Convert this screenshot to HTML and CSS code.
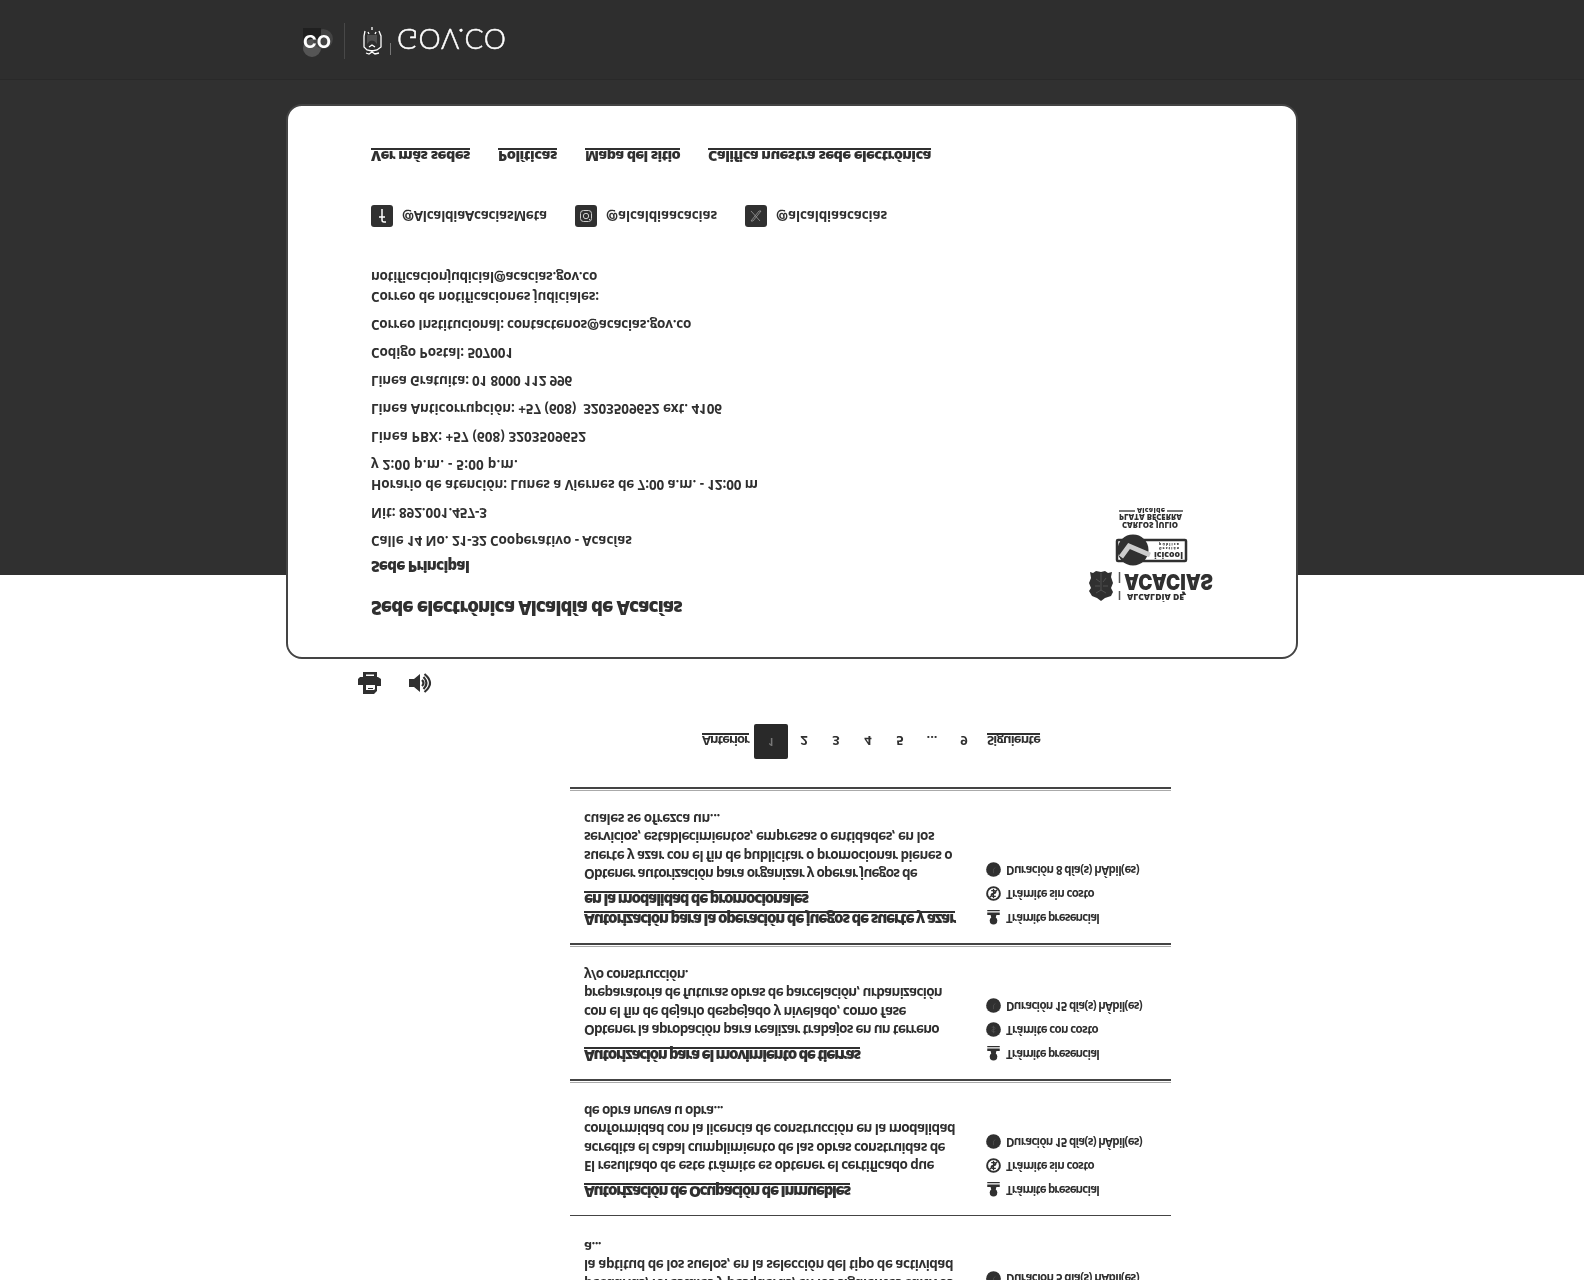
FILE: index.html
```html
<!DOCTYPE html>
<html lang="es">
<head>
<meta charset="utf-8">
<title>Trámites - Alcaldía de Acacías</title>
<link rel="stylesheet" href="styles.css">
</head>
<body>
<svg class="defs" width="0" height="0" aria-hidden="true">
  <symbol id="i-person" viewBox="0 0 16 18"><circle cx="8" cy="5" r="4.500"/><path d="M5.500 8h5l1 4h4v3H.5v-3h4zM.5 16.500h15V18H.5z"/></symbol>
  <symbol id="i-clock" viewBox="0 0 16 16"><circle cx="8" cy="8" r="7.800"/><path d="M8 4v4.500l2 1.500" fill="none" stroke="#4a4a4a"/></symbol>
  <symbol id="i-cost" viewBox="0 0 16 16"><circle cx="8" cy="8" r="7.800"/><path d="M10 5.500H7.500a1.200 1.200 0 000 2.500h1a1.200 1.200 0 010 2.500H6M8 4v8" fill="none" stroke="#505050" stroke-width=".8"/></symbol>
  <symbol id="i-free" viewBox="0 0 16 16"><circle cx="8" cy="8" r="6.800" fill="none" stroke="#303030" stroke-width="2"/><path d="M10.500 5H7a1.400 1.400 0 000 3h2a1.400 1.400 0 010 3H5.500M8 3v10M4 4l8 8" fill="none" stroke="#303030" stroke-width="1.300"/></symbol>
</svg>
<div class="page">
  <main class="list">
    <article class="item item-first">
      <div class="text">
        <p><span data-w="369">pecuarias, forestales y pesqueras, en los siguientes cultivos</span></p>
        <p><span data-w="369">la aptitud de los suelos, en la selección del tipo de actividad</span></p>
        <p><span data-w="17">a...</span></p>
      </div>
      <ul class="meta">
        <li><svg><use href="#i-clock"/></svg><span data-w="133">Duración 5 día(s) hÁbil(es)</span></li>
      </ul>
    </article>
    <article class="item">
      <div class="text">
        <h2><span data-w="266">Autorización de Ocupación de Inmuebles</span></h2>
        <p><span data-w="350">El resultado de este trámite es obtener el certificado que</span></p>
        <p><span data-w="361">acredita el cabal cumplimiento de las obras construidas de</span></p>
        <p><span data-w="371">conformidad con la licencia de construcción en la modalidad</span></p>
        <p><span data-w="139">de obra nueva u obra...</span></p>
      </div>
      <ul class="meta">
        <li><svg><use href="#i-person"/></svg><span data-w="93">Trámite presencial</span></li>
        <li><svg><use href="#i-free"/></svg><span data-w="88">Trámite sin costo</span></li>
        <li><svg><use href="#i-clock"/></svg><span data-w="136">Duración 15 día(s) hÁbil(es)</span></li>
      </ul>
    </article>
    <article class="item">
      <div class="text">
        <h2><span data-w="276">Autorización para el movimiento de tierras</span></h2>
        <p><span data-w="355">Obtener la aprobación para realizar trabajos en un terreno</span></p>
        <p><span data-w="322">con el fin de dejarlo despejado y nivelado, como fase</span></p>
        <p><span data-w="358">preparatoria de futuras obras de parcelación, urbanización</span></p>
        <p><span data-w="104">y/o construcción.</span></p>
      </div>
      <ul class="meta">
        <li><svg><use href="#i-person"/></svg><span data-w="93">Trámite presencial</span></li>
        <li><svg><use href="#i-cost"/></svg><span data-w="92">Trámite con costo</span></li>
        <li><svg><use href="#i-clock"/></svg><span data-w="136">Duración 15 día(s) hÁbil(es)</span></li>
      </ul>
    </article>
    <article class="item">
      <div class="text">
        <h2><span data-w="371">Autorización para la operación de juegos de suerte y azar</span><br><span data-w="224">en la modalidad de promocionales</span></h2>
        <p><span data-w="333">Obtener autorización para organizar y operar juegos de</span></p>
        <p><span data-w="368">suerte y azar con el fin de publicitar o promocionar bienes o</span></p>
        <p><span data-w="350">servicios, establecimientos, empresas o entidades, en los</span></p>
        <p><span data-w="136">cuales se ofrezca un...</span></p>
      </div>
      <ul class="meta">
        <li><svg><use href="#i-person"/></svg><span data-w="93">Trámite presencial</span></li>
        <li><svg><use href="#i-free"/></svg><span data-w="88">Trámite sin costo</span></li>
        <li><svg><use href="#i-clock"/></svg><span data-w="133">Duración 8 día(s) hÁbil(es)</span></li>
      </ul>
    </article>
  </main>

  <nav class="pager">
    <a class="word prev"><span data-w="47">Anterior</span></a>
    <a class="num current">1</a><a class="num">2</a><a class="num">3</a><a class="num">4</a><a class="num">5</a><a class="num">...</a><a class="num">9</a>
    <a class="word next"><span data-w="53">Siguiente</span></a>
  </nav>

  <div class="tools">
    <svg width="24" height="22" viewBox="0 0 24 22"><path fill="#303030" d="M5 0h11l3 3v5h4v7l-3 2H19v5H5v-5H2l-2-2V9h5z"/><path d="M8 4h8l1 1v4H8zM8 18h8v1.500H8z" fill="#fff"/><path d="M10 5.500h5" stroke="#303030"/></svg>
    <svg width="25" height="22" viewBox="0 0 25 22"><path fill="#303030" d="M0 7h5l6-5v18l-6-5H0z"/><path d="M13 8q3 3 0 6M14.500 5q6 6 0 12M15.500 2q11 9 0 18" fill="none" stroke="#303030" stroke-width="2.200"/></svg>
  </div>

  <footer class="footer">
    <section class="card">
      <div class="contact">
        <h1><span data-w="311">Sede electrónica Alcaldía de Acacías</span></h1>
        <h3><span data-w="98">Sede Principal</span></h3>
        <p><span data-w="261">Calle 14 No. 21-32 Cooperativo - Acacías</span></p>
        <p><span data-w="116">Nit: 892.001.457-3</span></p>
        <p><span data-w="387">Horario de atención: Lunes a Viernes de 7:00 a.m. - 12:00 m</span><br><span data-w="147">y 2:00 p.m. - 5:00 p.m.</span></p>
        <p><span data-w="215">Linea PBX: +57 (608) 3203509652</span></p>
        <p><span data-w="351">Linea Anticorrupción: +57 (608)&nbsp; 3203509652 ext. 4106</span></p>
        <p><span data-w="201">Linea Gratuita: 01 8000 112 996</span></p>
        <p><span data-w="142">Codigo Postal: 507001</span></p>
        <p><span data-w="320">Correo Institucional: contactenos@acacias.gov.co</span></p>
        <p><span data-w="228">Correo de notificaciones judiciales:</span><br><span data-w="226">notificacionjudicial@acacias.gov.co</span></p>
        <div class="social">
          <a><svg width="22" height="22" viewBox="0 0 22 22"><rect width="22" height="22" rx="3" fill="#303030"/><path d="M15 5h-2q-2 0-2 2v11M8 10h6" fill="none" stroke="#fff" stroke-width="1.500"/></svg><span data-w="145">@AlcaldiaAcaciasMeta</span></a>
          <a><svg width="22" height="22" viewBox="0 0 22 22"><rect width="22" height="22" rx="3" fill="#303030"/><g fill="none" stroke="#ccc"><rect x="5.500" y="5.500" width="11" height="11" rx="3"/><circle cx="11" cy="11" r="2.700"/></g><path d="M14 7h1v1h-1z" fill="#ccc"/></svg><span data-w="111">@alcaldiaacacias</span></a>
          <a><svg width="22" height="22" viewBox="0 0 22 22"><rect width="22" height="22" rx="3" fill="#303030"/><path d="M6 6l8 10h2L8 6zM15 6l-9 10" fill="none" stroke="#999" stroke-width=".8"/></svg><span data-w="111">@alcaldiaacacias</span></a>
        </div>
        <div class="links">
          <a><span data-w="99">Ver más sedes</span></a><a><span data-w="59">Políticas</span></a><a><span data-w="95">Mapa del sitio</span></a><a><span data-w="223">Califica nuestra sede electrónica</span></a>
        </div>
      </div>
      <svg class="brand" width="134" height="104" viewBox="0 0 134 104">
        <path d="M6 7l5-2 4-3 4 3 6 2 2 4-2 4 2 5-2 6 1 5-4-1-3 2-4-1-5 1-3-2-3 1 1-6-2-5 2-5-2-3z" fill="#303030"/>
        <path d="M10 10l5 3 5-3M9 17h5M17 17h5M10 24l4-3M20 25l-3-4M15 12v18" fill="none" stroke="#505050"/>
        <path d="M33.500 3v9M33.500 20v11" stroke="#555" stroke-width="1.500"/>
        <g class="brand-text">
          <text x="41" y="9" font-size="8" textLength="57" lengthAdjust="spacingAndGlyphs">ALCALDÍA DE</text>
          <text class="name" x="38" y="29" font-size="22" textLength="89" lengthAdjust="spacingAndGlyphs">ACACÍAS</text>
          <rect x="31" y="42" width="69" height="21" rx="1" fill="none" stroke="#303030" stroke-width="2.500"/>
          <text x="68" y="51" font-size="9" textLength="29" lengthAdjust="spacingAndGlyphs">icicool</text>
          <text x="73" y="55.500" font-size="3.500" textLength="20">Gestión</text>
          <text x="73" y="60" font-size="3.500" textLength="20">pública</text>
          <circle cx="47" cy="53" r="15.500"/>
          <path d="M35 46l8 11 21-9" fill="none" stroke="#ccc" stroke-width="5"/>
          <text x="36" y="81" font-size="8.500" textLength="56" lengthAdjust="spacingAndGlyphs">CARLOS JULIO</text>
          <text x="33" y="88.500" font-size="8.500" textLength="63" lengthAdjust="spacingAndGlyphs">PLATA BECERRA</text>
          <text x="51" y="95" font-size="7" textLength="28">Alcalde</text>
          <path d="M33 92h16M81 92h16" stroke="#777" stroke-width="2"/>
        </g>
      </svg>
    </section>
  </footer>

  <div class="govbar">
    <svg width="220" height="44" viewBox="0 0 220 44">
      <circle cx="12" cy="13" r="9" fill="#555"/><circle cx="23" cy="22" r="10" fill="#444"/><path d="M3 22h18v11H3z" fill="#202020"/>
      <text class="co" x="3" y="26" textLength="28" lengthAdjust="spacingAndGlyphs">CO</text>
      <path d="M44.500 2v36" stroke="#484848"/><path d="M90.500 6v12" stroke="#777"/>
      <path d="M65 30l-1-5V14l3-3 5-1 5 1 4 3v11l-2 5M66 8l3-1 3 2 3-2 4 1M68 29l1-2M76 29l-1-2M72 31v3M69 14l3 2 3-2" fill="none" stroke="#fff" stroke-width="1.300"/>
      <path d="M67 17q5 7 10 0v9H67z" fill="#505050"/>
      <text class="gov" x="97" y="31.500" textLength="109">GOV.CO</text>
    </svg>
  </div>
</div>
<script src="fit.js"></script>
</body>
</html>
```
FILE: styles.css
```css
* { box-sizing: border-box; }
html, body { margin: 0; padding: 0; background: #fff; }
body {
  height: 1280px;
  overflow: hidden;
  font-family: "Open Sans", "Noto Sans", sans-serif;
  color: #303030;
}
h1, h2, h3, p, ul { margin: 0; padding: 0; list-style: none; }
span { white-space: nowrap; }
.defs { position: absolute; }
.page {
  height: 1280px;
  display: flex;
  flex-direction: column;
  justify-content: flex-end;
  overflow: hidden;
  transform: scaleY(-1);
}
.page > * { flex: none; }

.list { width: 601px; margin-left: 570px; }
.item {
  display: flex;
  padding: 13px 0 22.5px 14px;
  background: linear-gradient(#aaa 0 1px, #fff 1px 2px, #444 2px 4px) bottom / 100% 4px no-repeat;
}
.item-first { background: linear-gradient(#444, #444) bottom / 100% 1.500px no-repeat; }
.text { width: 402px; }
.text h2 {
  font-size: 15px;
  font-weight: 800;
  line-height: 20px;
  margin-bottom: 6.500px;
  text-decoration: underline;
  text-decoration-thickness: 2px;
  text-decoration-skip-ink: none;
  text-underline-offset: 1px;
}
.text p { font-size: 13.500px; font-weight: 700; line-height: 18.500px; }
.meta { padding-top: 2px; font-size: 11.500px; font-weight: 700; }
.meta li { height: 24px; display: flex; align-items: center; gap: 5px; line-height: 16px; padding-bottom: 4px; }
.meta svg { width: 15px; height: 15px; fill: #303030; }
.item-first .meta { align-self: flex-end; padding-bottom: 27px; }

.pager {
  height: 35px;
  margin: 28px 0 30px 702px;
  display: flex;
  align-items: center;
  font-size: 13px;
  font-weight: 700;
}
.word { text-decoration: underline; text-decoration-thickness: 2px; text-decoration-skip-ink: none; }
.prev { width: 52px; }
.num { width: 32px; text-align: center; }
.num.current { width: 34px; height: 35px; line-height: 34px; border-radius: 2px; background: #292929; color: #777; font-size: 10px; }
.next { padding-left: 7px; }

.tools { display: flex; gap: 27px; margin: 0 0 97px 358px; height: 22px; }

.footer { height: 495px; background: #303030; }
.card {
  width: 1012px;
  height: 555px;
  margin: 0 auto;
  position: relative;
  top: -84px;
  padding: 36px 82px 0 83px;
  display: flex;
  justify-content: space-between;
  background: #fff;
  border: 2px solid #444;
  border-radius: 16px;
}
.contact h1 { font-size: 18.500px; font-weight: 800; line-height: 26px; }
.contact h3 { font-size: 15px; font-weight: 800; line-height: 20px; margin: 18px 0 8px; }
.contact p { font-size: 13.500px; font-weight: 700; line-height: 20px; margin-bottom: 8px; }
.contact h3 + p { margin-top: -2px; }
.social { display: flex; gap: 28px; margin-top: 40px; font-size: 13.500px; font-weight: 700; }
.social a { display: flex; align-items: center; gap: 9px; }
.social svg { flex: none; }
.links { display: flex; gap: 28px; margin-top: 38px; font-size: 14.500px; font-weight: 800; line-height: 22px; }
.links a { text-decoration: underline; text-decoration-thickness: 2px; text-decoration-skip-ink: none; }
.brand { margin-top: 18px; margin-right: -6px; flex: none; }
.brand-text { font-family: "Open Sans", sans-serif; font-weight: 800; fill: #303030; }
.brand .name { font-family: Inter, sans-serif; font-weight: 900; }

.govbar { height: 80px; padding: 18px 0 0 300px; background: #2e2e2e; border-top: 1px solid #292929; }
.co { font: 700 18px Inter, sans-serif; fill: #fff; }
.gov { font: 300 28px Lato, sans-serif; fill: #fff; stroke: #fff; stroke-width: .5px; }
```
FILE: fit.js
```js
document.fonts.ready.then(() => {
  document.querySelectorAll("[data-w]").forEach((el) => {
    const extra = Number(el.dataset.w) - el.getBoundingClientRect().width;
    el.style.letterSpacing = extra / el.textContent.length + "px";
  });
});
```
